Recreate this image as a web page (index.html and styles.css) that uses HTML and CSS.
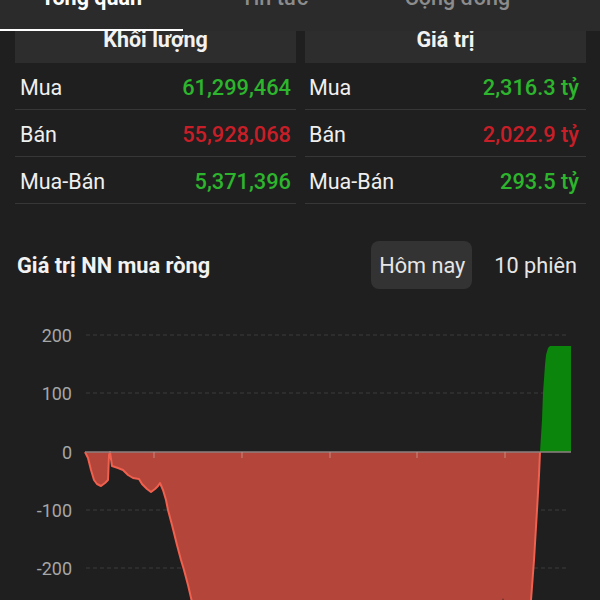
FILE: index.html
```html
<!DOCTYPE html>
<html lang="vi">
<head>
<meta charset="utf-8">
<link rel="stylesheet" href="styles.css">
</head>
<body>
<nav class="tabs">
  <div class="tab active"><span>Tổng quan</span></div>
  <div class="tab"><span>Tin tức</span></div>
  <div class="tab"><span>Cộng đồng</span></div>
  <div class="tab"><span>Tổng hợp</span></div>
</nav>
<main class="content">
  <section class="stats">
    <div class="col">
      <div class="head">Khối lượng</div>
      <div class="row"><span class="lbl">Mua</span><span class="val up">61,299,464</span></div>
      <div class="row"><span class="lbl">Bán</span><span class="val down">55,928,068</span></div>
      <div class="row"><span class="lbl">Mua-Bán</span><span class="val up">5,371,396</span></div>
    </div>
    <div class="col">
      <div class="head">Giá trị</div>
      <div class="row"><span class="lbl">Mua</span><span class="val up">2,316.3 tỷ</span></div>
      <div class="row"><span class="lbl">Bán</span><span class="val down">2,022.9 tỷ</span></div>
      <div class="row"><span class="lbl">Mua-Bán</span><span class="val up">293.5 tỷ</span></div>
    </div>
  </section>
  <section class="title-row">
    <h2 class="title">Giá trị NN mua ròng</h2>
    <div class="seg">
      <span class="seg-btn on">Hôm nay</span>
      <span class="seg-btn">10 phiên</span>
    </div>
  </section>
</main>
<svg class="chart" width="600" height="300" viewBox="0 0 600 300">
  <g transform="translate(0,-300)">
    <g class="axis">
      <text x="72" y="335">200</text>
      <text x="72" y="393">100</text>
      <text x="72" y="452">0</text>
      <text x="72" y="510">-100</text>
      <text x="72" y="568">-200</text>
    </g>
    <g class="grid">
      <line x1="86" y1="335" x2="568" y2="335"/>
      <line x1="86" y1="393" x2="568" y2="393"/>
      <line x1="86" y1="510" x2="568" y2="510"/>
      <line x1="86" y1="568" x2="568" y2="568"/>
    </g>
    <path class="neg" d="M85,452 L88,458 L91,470 L94,480 L97,484 L101,486 L105,483 L108,480 L109,455 L110,452 L112,466 L118,468 L123,470 L128,475 L133,478 L139,479 L142,484 L147,489 L151,492 L155,489 L158,486 L160,483 L163,490 L166,500 L168,510 L172,525 L177,545 L181,560 L184,570 L188,585 L192,602 L196,620 L498,620 L503,598 L508,620 L529,620 L531,600 L534,560 L537,510 L539,475 L540,452 Z"/>
    <path class="negline" d="M85,452 L88,458 L91,470 L94,480 L97,484 L101,486 L105,483 L108,480 L109,455 L110,452 L112,466 L118,468 L123,470 L128,475 L133,478 L139,479 L142,484 L147,489 L151,492 L155,489 L158,486 L160,483 L163,490 L166,500 L168,510 L172,525 L177,545 L181,560 L184,570 L188,585 L192,602 L196,620"/>
    <path class="negline" d="M529,620 L531,600 L534,560 L537,510 L539,475 L540,452"/>
    <path class="pos" d="M540,452 L542,420 L543,393 L545,365 L546,355 L548,348 L550,346 L571,346 L571,452 Z"/>
    <line class="zero" x1="85" y1="452" x2="571" y2="452"/>
    <g class="ticks">
      <line x1="154" y1="452" x2="154" y2="458"/>
      <line x1="242" y1="452" x2="242" y2="458"/>
      <line x1="330" y1="452" x2="330" y2="458"/>
      <line x1="417" y1="452" x2="417" y2="458"/>
      <line x1="505" y1="452" x2="505" y2="458"/>
    </g>
  </g>
</svg>
</body>
</html>
```
FILE: styles.css
```css
* { box-sizing: border-box; }
html, body { margin: 0; padding: 0; }
body {
  background: #1f1f1f;
  color: #ececec;
  font-family: Roboto, "Noto Sans", "Liberation Sans", sans-serif;
  width: 600px;
  height: 600px;
  overflow: hidden;
}
.tabs {
  display: flex;
  height: 31px;
  background: #2b2b2b;
  position: relative;
  z-index: 1;
  margin-bottom: -5px;
  overflow: hidden;
}
.tab {
  flex: 0 0 183px;
  text-align: center;
  height: 31px;
  color: #8c8c8c;
  font-size: 21.5px;
  font-weight: 500;
}
.tab span {
  display: block;
  line-height: 20px;
  margin-top: -12px;
  white-space: nowrap;
}
.tab.active {
  color: #ffffff;
  font-weight: 700;
  border-bottom: 2px solid #ffffff;
}
.content {
  padding: 0 14px 0 15px;
}
.stats {
  display: grid;
  grid-template-columns: 281px 281px;
  gap: 9px;
}
.head {
  height: 37px;
  background: #2d2d2d;
  text-align: center;
  font-weight: 700;
  font-size: 21.5px;
  line-height: 28px;
  color: #f2f2f2;
}
.row {
  height: 47px;
  padding: 2px 5px 0 5px;
  display: flex;
  justify-content: space-between;
  align-items: center;
  border-bottom: 1px solid #373737;
  font-size: 21.5px;
}
.col:last-child .row { padding-left: 4px; padding-right: 7px; }
.lbl { color: #efefef; }
.val { font-weight: 500; font-size: 21.8px; }
.up { color: #2db52d; }
.down { color: #c81e28; }
.title-row {
  display: flex;
  justify-content: space-between;
  align-items: center;
  margin-top: 37px;
  padding-left: 2px;
}
.title {
  margin: 0;
  font-size: 21.8px;
  font-weight: 700;
  color: #f2f2f2;
}
.seg {
  display: flex;
  align-items: center;
  gap: 14px;
  margin-right: 1px;
}
.seg-btn {
  display: flex;
  align-items: center;
  height: 48px;
  padding: 0 8px;
  font-size: 21.7px;
  color: #e6e6e6;
  border-radius: 8px;
}
.seg-btn.on { background: #333333; padding-right: 7px; }
.chart {
  display: block;
  margin-top: 11px;
  overflow: visible;
}
.axis text {
  font-family: Roboto, "Liberation Sans", sans-serif;
  font-size: 18px;
  fill: #a6a6a6;
  text-anchor: end;
  dominant-baseline: central;
}
.grid line {
  stroke: #3d3d3d;
  stroke-width: 1;
  stroke-dasharray: 4 3;
}
.neg { fill: #b3453a; }
.negline {
  fill: none;
  stroke: #f0604e;
  stroke-width: 2;
  stroke-linejoin: round;
}
.pos { fill: #0b850b; }
.zero { stroke: #8e8080; stroke-width: 1.5; }
.ticks line { stroke: #c98a80; stroke-width: 1; }
```
